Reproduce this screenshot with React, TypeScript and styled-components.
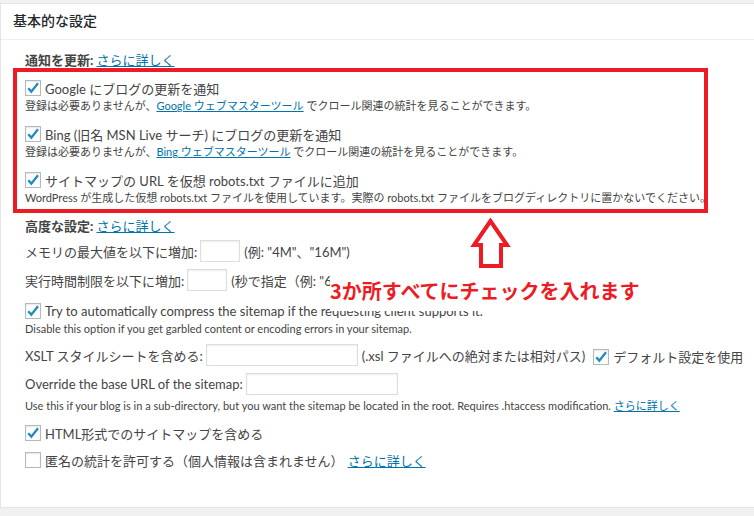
import { createGlobalStyle } from "styled-components";
import styled from "styled-components";

// ページ全体の基本スタイル
const GlobalStyle = createGlobalStyle`
  html, body {
    margin: 0;
    background: #f1f1f1;
    font-family: Lato, "Noto Sans CJK JP", sans-serif;
    color: #444;
    overflow: hidden;
  }
`;

const Page = styled.div`
  padding-top: 3px;
`;

// 設定パネル
const Panel = styled.div`
  position: relative;
  background: #fff;
  border: 1px solid #e5e5e5;
  border-right: 0;
  box-shadow: 0 1px 1px rgba(0, 0, 0, 0.04);
`;

const PanelHeader = styled.h3`
  margin: 0;
  padding: 7px 12px 8px;
  font-size: 14px;
  line-height: 20px;
  font-weight: 500;
  color: #23282d;
  border-bottom: 1px solid #eee;
`;

const PanelBody = styled.div`
  padding: 0 12px 37px;
`;

const SectionTitle = styled.div<{ $mt: number }>`
  margin: ${(p) => p.$mt}px 0 0 12px;
  font-size: 13px;
  line-height: 16px;
  font-weight: 700;
  color: #444;
`;

const Link = styled.a`
  color: #0073aa;
  text-decoration: underline;
  font-weight: 400;
  cursor: pointer;
`;

// 赤枠（注釈）
const Highlight = styled.div`
  width: 695px;
  box-sizing: border-box;
  border: 4px solid #ed1c24;
  padding: 6px 8px 3px;
`;

const Item = styled.div`
  & + & {
    margin-top: 10px;
  }
`;

const CheckRow = styled.label<{ $mt?: number; $indent?: boolean }>`
  display: flex;
  align-items: center;
  gap: 4px;
  height: 20px;
  margin: ${(p) => p.$mt ?? 0}px 0 0 ${(p) => (p.$indent ? 12 : 0)}px;
  font-size: 13px;
  color: #444;
  white-space: nowrap;
`;

const Box = styled.span`
  display: inline-flex;
  align-items: center;
  justify-content: center;
  flex: none;
  width: 16px;
  height: 16px;
  box-sizing: border-box;
  border: 1px solid #b4b9be;
  background: #fff;
  box-shadow: inset 0 1px 2px rgba(0, 0, 0, 0.1);
`;

const Desc = styled.div<{ $indent?: boolean; $mt?: number }>`
  margin: ${(p) => p.$mt ?? 0}px 0 0 ${(p) => (p.$indent ? 12 : 0)}px;
  font-size: 11px;
  line-height: 16px;
  color: #444;
  white-space: nowrap;
`;

const FieldRow = styled.div<{ $mt: number }>`
  display: flex;
  align-items: center;
  height: 22px;
  margin: ${(p) => p.$mt}px 0 0 12px;
  font-size: 13px;
  color: #444;
  white-space: nowrap;
`;

const TextInput = styled.input<{ $w: number }>`
  width: ${(p) => p.$w}px;
  height: 22px;
  box-sizing: border-box;
  margin: 0 4px 0 3px;
  padding: 2px 4px;
  border: 1px solid #ddd;
  box-shadow: inset 0 1px 2px rgba(0, 0, 0, 0.07);
  background: #fff;
  outline: none;
  font: inherit;
`;

const InlineCheck = styled.span`
  display: inline-flex;
  align-items: center;
  gap: 4px;
  margin: 3px 0 0 8px;
`;

// 注釈テキストと矢印
const Note = styled.div`
  position: absolute;
  left: 329px;
  top: 269px;
  width: 332px;
  height: 38px;
  box-sizing: border-box;
  padding-top: 6px;
  background: #fff;
  color: #ed1c24;
  font-family: "Noto Sans CJK JP", sans-serif;
  font-size: 20px;
  line-height: 24px;
  font-weight: 700;
  white-space: nowrap;
`;

const Arrow = styled.svg`
  position: absolute;
  left: 468px;
  top: 213px;
`;

const Checkbox = ({ checked }: { checked: boolean }) => (
  <Box>
    {checked && (
      <svg width="14" height="14" viewBox="0 0 14 14">
        <path d="M2.3 7.2 L5.3 10.6 L12 2.2" fill="none" stroke="#1e8cbe" strokeWidth="2.3" strokeLinejoin="miter" />
      </svg>
    )}
  </Box>
);

export default function App() {
  return (
    <>
      <GlobalStyle />
      <Page>
        <Panel>
          <PanelHeader>基本的な設定</PanelHeader>
          <PanelBody>
            <SectionTitle $mt={12}>
              通知を更新: <Link>さらに詳しく</Link>
            </SectionTitle>
            <Highlight>
              <Item>
                <CheckRow>
                  <Checkbox checked />
                  Google にブログの更新を通知
                </CheckRow>
                <Desc>
                  登録は必要ありませんが、<Link>Google ウェブマスターツール</Link> でクロール関連の統計を見ることができます。
                </Desc>
              </Item>
              <Item>
                <CheckRow>
                  <Checkbox checked />
                  Bing (旧名 MSN Live サーチ) にブログの更新を通知
                </CheckRow>
                <Desc>
                  登録は必要ありませんが、<Link>Bing ウェブマスターツール</Link> でクロール関連の統計を見ることができます。
                </Desc>
              </Item>
              <Item>
                <CheckRow>
                  <Checkbox checked />
                  サイトマップの URL を仮想 robots.txt ファイルに追加
                </CheckRow>
                <Desc>
                  WordPress が生成した仮想 robots.txt ファイルを使用しています。実際の robots.txt ファイルをブログディレクトリに置かないでください。
                </Desc>
              </Item>
            </Highlight>

            <SectionTitle $mt={5}>
              高度な設定: <Link>さらに詳しく</Link>
            </SectionTitle>
            <FieldRow $mt={6}>
              メモリの最大値を以下に増加:
              <TextInput $w={40} />
              (例: "4M"、"16M")
            </FieldRow>
            <FieldRow $mt={7}>
              実行時間制限を以下に増加:
              <TextInput $w={40} />
              (秒で指定（例: "60"、"0" で無制限）)
            </FieldRow>
            <CheckRow $mt={10} $indent>
              <Checkbox checked />
              Try to automatically compress the sitemap if the requesting client supports it.
            </CheckRow>
            <Desc $indent>Disable this option if you get garbled content or encoding errors in your sitemap.</Desc>
            <FieldRow $mt={7}>
              XSLT スタイルシートを含める:
              <TextInput $w={152} />
              (.xsl ファイルへの絶対または相対パス)
              <InlineCheck>
                <Checkbox checked />
                デフォルト設定を使用
              </InlineCheck>
            </FieldRow>
            <FieldRow $mt={7}>
              Override the base URL of the sitemap:
              <TextInput $w={152} />
            </FieldRow>
            <Desc $indent $mt={3}>
              Use this if your blog is in a sub-directory, but you want the sitemap be located in the root. Requires .htaccess modification. <Link>さらに詳しく</Link>
            </Desc>
            <CheckRow $mt={9} $indent>
              <Checkbox checked />
              HTML形式でのサイトマップを含める
            </CheckRow>
            <CheckRow $mt={7} $indent>
              <Checkbox checked={false} />
              匿名の統計を許可する（個人情報は含まれません） <Link>さらに詳しく</Link>
            </CheckRow>
          </PanelBody>

          <Arrow width="44" height="54" viewBox="0 0 44 54">
            <polygon points="21.5,4 5,28 12,28 12,49 32,49 32,28 38,28" fill="#fff" stroke="#ed1c24" strokeWidth="4" strokeLinejoin="miter" />
          </Arrow>
          <Note>3か所すべてにチェックを入れます</Note>
        </Panel>
      </Page>
    </>
  );
}
